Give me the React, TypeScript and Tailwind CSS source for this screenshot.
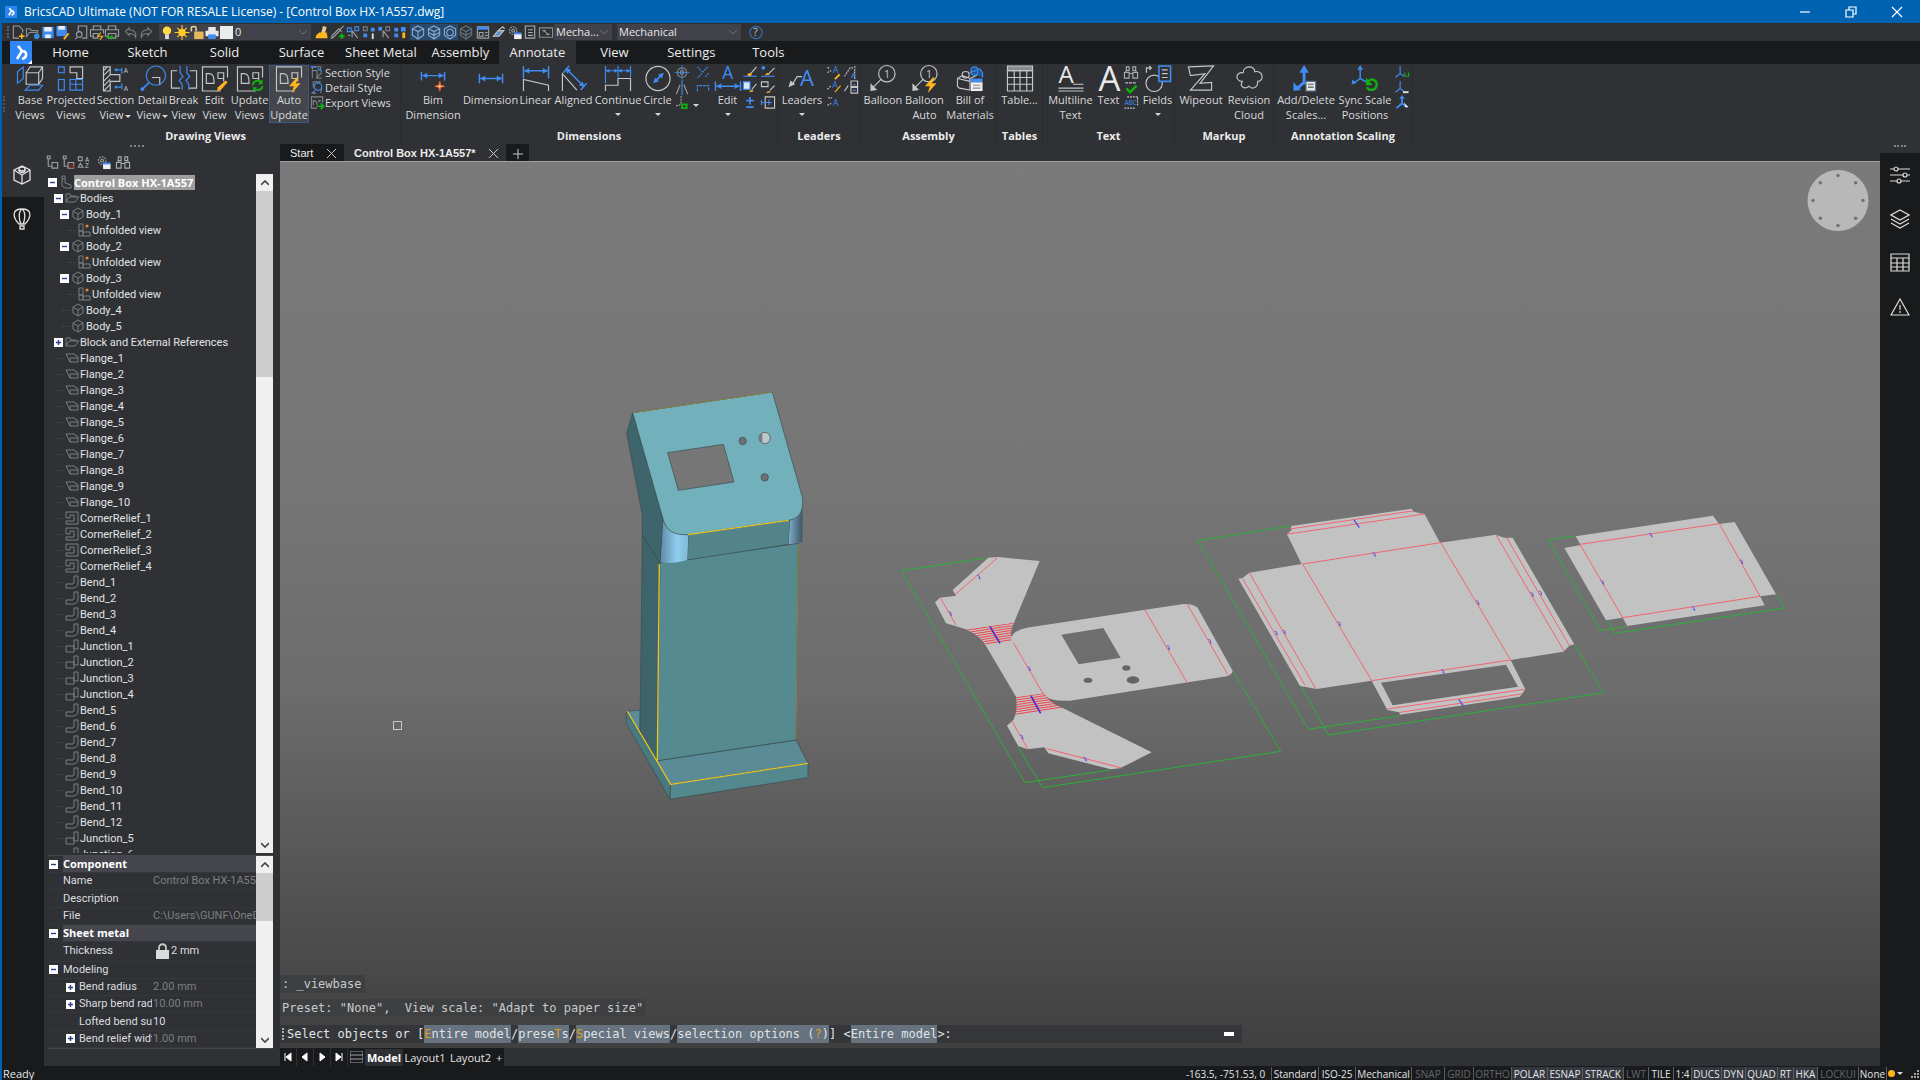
// BricsCAD style workspace: title bar, quick access bar, ribbon, mechanical
// browser on the left, model viewport with command line, and status bar.

import type { ReactNode } from "react";
import clsx from "clsx";

const W = "#c4c6c8";
const B = "#3f8cf4";
const Y = "#ffb61e";
const G = "#10b010";

/* ---------- icon helpers ---------- */

function Svg({ size, className, children }: { size: number; className?: string; children: ReactNode }) {
  return (
    <svg
      viewBox={`0 0 ${size} ${size}`}
      fill="none"
      stroke={W}
      strokeWidth="1.2"
      className={clsx("shrink-0 overflow-visible", className)}
      aria-hidden="true"
    >
      {children}
    </svg>
  );
}

const Big = ({ children }: { children: ReactNode }) => (
  <Svg size={28} className="h-[27px] w-7">
    {children}
  </Svg>
);

const Small = ({ children }: { children: ReactNode }) => (
  <Svg size={16} className="h-[15px] w-4">
    {children}
  </Svg>
);

function Glyph({ x, y, size, fill = W, children }: { x: number; y: number; size: number; fill?: string; children: string }) {
  return (
    <text x={x} y={y} fontSize={size} fill={fill} stroke="none" fontFamily="Open Sans, sans-serif">
      {children}
    </text>
  );
}

const Bolt = () => <path d="M22 13l-8 9h5l-2 7 9-10h-5l3-6z" fill={Y} stroke="none" />;

const Sheet = () => (
  <>
    <path d="M20 27H1V2h26v11" />
    <path d="M5 19V9h3c4 0 5 3 5 10zM17 14V8h6v9M17 14h6" />
  </>
);

/* ---------- ribbon icons ---------- */

const icons = {
  base: (
    <Big>
      <path d="M10 8h13v12H10zM10 8l4-6h13v12l-4 6M23 8l4-6" />
      <path d="M1 7l6-5v12l-6 5zM9 26l5-5h13l-4 5z" stroke={B} />
    </Big>
  ),
  projected: (
    <Big>
      <path d="M13 2h13v12h-6V8h-7z" />
      <path d="M1 2h6v6H1zM1 15h6v11H1zM13 15h13v11H13zM19 15v11M13 20h13" stroke={B} />
    </Big>
  ),
  section: (
    <Big>
      <path d="M1 2h7v8h10v7H8v10H1zM1 6l4-4M1 11l7-7M1 17l7-7M1 22l7-7M1 27l7-7" />
      <path d="M20 3v6M20 19v6M20 5h-7M20 23h-7" stroke={B} />
      <path d="M12 5l3-2v4zM12 23l3-2v4z" fill={B} stroke="none" />
      <Glyph x={22} y={8} size={7}>A</Glyph>
      <Glyph x={22} y={27} size={7}>A</Glyph>
    </Big>
  ),
  detail: (
    <Big>
      <path d="M13 13h8v8" />
      <circle cx="17" cy="11" r="10" stroke={B} />
      <path d="M10 18l-8 8" stroke={B} strokeWidth="1.8" />
      <circle cx="3" cy="25" r="2" fill={B} stroke="none" />
    </Big>
  ),
  brk: (
    <Big>
      <path d="M7 6H1v18h9M20 6h7v18h-8" />
      <path d="M10 1v7l3 4-4 4 3 4v6M17 1v7l3 4-4 4 3 4v6" stroke={B} />
    </Big>
  ),
  edit: (
    <Big>
      <Sheet />
      <path d="M16 27l1-4 8-7 2 2-7 8z" fill={Y} stroke="none" />
    </Big>
  ),
  update: (
    <Big>
      <Sheet />
      <path d="M17 21c0-5 7-6 9-3M27 22c-1 5-7 5-9 2" stroke={G} strokeWidth="2" />
      <path d="M27 15v5h-5zM17 28v-5h4z" fill={G} stroke="none" />
    </Big>
  ),
  auto: (
    <Big>
      <Sheet />
      <Bolt />
    </Big>
  ),
  bim: (
    <Big>
      <path d="M2 7v9M26 7v9M3 11h22" stroke={B} strokeWidth="1.5" />
      <path d="M3 11l5-3v6zM25 11l-5-3v6z" fill={B} stroke="none" />
      <path d="M21 17l1 4 4 1-4 1-1 4-1-4-4-1 4-1z" fill="#ffd9a0" stroke="#e2622a" />
    </Big>
  ),
  dimension: (
    <Big>
      <path d="M2 9v10M26 9v10M3 14h22" stroke={B} strokeWidth="1.5" />
      <path d="M3 14l5-3v6zM25 14l-5-3v6z" fill={B} stroke="none" />
    </Big>
  ),
  linear: (
    <Big>
      <path d="M1 1v13M27 1v13M2 6h24" stroke={B} strokeWidth="1.5" />
      <path d="M2 6l5-3v6zM26 6l-5-3v6z" fill={B} stroke="none" />
      <path d="M1 27V15l26 6v6" />
    </Big>
  ),
  aligned: (
    <Big>
      <path d="M2 27V9l15 17" />
      <path d="M3 8l6-7M21 26l6-7M6 4l18 18" stroke={B} strokeWidth="1.5" />
      <path d="M5 3l6 2-4 4zM25 23l-6-2 4-4z" fill={B} stroke="none" />
    </Big>
  ),
  cont: (
    <Big>
      <path d="M1 1v18M14 1v12M27 1v12M1 6h26" stroke={B} />
      <path d="M1 6l4-2v4zM14 6l-4-2v4zM14 6l4-2v4zM27 6l-4-2v4z" fill={B} stroke="none" />
      <path d="M1 27v-6h13v-7h13v13" />
    </Big>
  ),
  circle: (
    <Big>
      <circle cx="14" cy="14" r="12.5" />
      <path d="M11 17l6-6" stroke={B} strokeWidth="1.8" />
      <path d="M9 19l2-6 4 4zM20 8l-2 6-4-4z" fill={B} stroke="none" />
    </Big>
  ),
  editDim: (
    <Big>
      <Glyph x={8} y={14} size={18} fill={B}>A</Glyph>
      <path d="M1 17v10M27 17v10M2 22h24" stroke={B} strokeWidth="1.5" />
      <path d="M2 22l5-3v6zM26 22l-5-3v6z" fill={B} stroke="none" />
    </Big>
  ),
  leaders: (
    <Big>
      <path d="M14 12H9l-5 8" />
      <path d="M0 23l2-7 5 4z" fill={W} stroke="none" />
      <Glyph x={12} y={22} size={23} fill={B}>A</Glyph>
    </Big>
  ),
  balloon: (
    <Big>
      <circle cx="18" cy="9" r="8.5" />
      <path d="M12 15l-8 8" />
      <path d="M1 27V19l7 7z" fill={W} stroke="none" />
      <Glyph x={15} y={13} size={11}>1</Glyph>
    </Big>
  ),
  balloonAuto: (
    <Big>
      <circle cx="18" cy="9" r="8.5" />
      <path d="M12 15l-8 8" />
      <path d="M1 27V19l7 7z" fill={W} stroke="none" />
      <Glyph x={15} y={13} size={11}>1</Glyph>
      <Bolt />
    </Big>
  ),
  bom: (
    <Big>
      <path d="M1 14l5-3 8 3v12L3 24l-2-2zM14 14l8-4M6 9c0-3 7-3 7 0v3c-2 2-5 2-7 0zM1 14l13 3" />
      <path d="M15 5c0-4 7-4 7 0v4c-2 2-5 2-7 0zM14 8l10-4 3 4v5" stroke={B} fill="#24538f" />
      <path d="M15 14h12v4H15z" fill={B} stroke="none" />
      <path d="M15 18h12v9H15z" fill="#f2f2f2" stroke="none" />
      <path d="M17 21h8M17 24h8" stroke="#888" />
    </Big>
  ),
  table: (
    <Big>
      <path d="M1 1h26v5H1z" fill="#8b8d90" />
      <path d="M1 6h26v21H1zM1 13h26M1 20h26M8 6v21M14 6v21M21 6v21" />
    </Big>
  ),
  mtext: (
    <Big>
      <Glyph x={1} y={19} size={25} fill="#e8e8e8">A</Glyph>
      <path d="M16 20h11M1 24h26M1 27h26" />
    </Big>
  ),
  text: (
    <Big>
      <Glyph x={3} y={27} size={36} fill="#e8e8e8">A</Glyph>
    </Big>
  ),
  fields: (
    <Big>
      <circle cx="10" cy="19" r="8.5" />
      <path d="M2 8V3h5M5 1l2 2-2 2" />
      <path d="M15 1h12v16H15z" stroke={B} strokeWidth="1.6" fill="#2f3134" />
      <path d="M18 5h6M18 9h6M18 13h6" />
    </Big>
  ),
  wipeout: (
    <Big>
      <path d="M1 2l26-1-14 18 12-1v8H3L18 9 3 11z" />
    </Big>
  ),
  cloud: (
    <Big>
      <path d="M8 8c0-8 12-8 12-1 9-2 10 10 3 10 0 8-7 8-9 5-5 4-10 0-7-5-8-1-7-10 1-9z" />
    </Big>
  ),
  scales: (
    <Big>
      <path d="M12 4v14L4 25M12 18l5 3" stroke={B} strokeWidth="3" />
      <path d="M12 0l5 8H7zM1 27V18l8 8z" fill={B} stroke="none" />
      <path d="M14 17h10v10H14z" fill="#e6e6e6" stroke="#51718f" />
      <path d="M16 20h6M16 23h6" stroke="#555" />
    </Big>
  ),
  sync: (
    <Big>
      <path d="M9 2v12L2 19M9 14l7 4" stroke={B} strokeWidth="1.5" />
      <path d="M9 0l3 5H6zM0 20l1-5 4 4z" fill={B} stroke="none" />
      <path d="M17 18c3-6 10-2 9 3-1 6-8 6-10 2" stroke={G} strokeWidth="2.4" />
      <path d="M15 13v8h7z" fill={G} stroke="none" />
    </Big>
  ),
};

/* ---------- small 16px icons ---------- */

const s = {
  sectionStyle: <Small><path d="M3 14V2h9v4M3 6h5v8h5M7 14l6-6" stroke="#7b7e82" /><path d="M1 2h6M9 4l4 3" stroke={B} /></Small>,
  detailStyle: <Small><path d="M4 8V2h8M2 14h5M12 14l1-6" stroke="#7b7e82" /><circle cx="9" cy="7" r="4" stroke={B} /><path d="M6 11l-3 3" stroke={B} /></Small>,
  exportViews: <Small><path d="M14 8V2H2v12h6M4 11V6c4 0 4 2 4 5M10 8V6h2" stroke="#85888b" /><path d="M8 12h6M12 9l3 3-3 3" stroke={G} strokeWidth="1.8" /></Small>,
  center: <Small><circle cx="8" cy="8" r="5" stroke="#85888b" /><circle cx="8" cy="8" r="2" stroke="#85888b" /><path d="M8 0v16M0 8h16" stroke={B} strokeWidth=".8" /></Small>,
  angular: <Small><path d="M8 0v16" stroke={B} /><path d="M6 5L2 15M10 5l4 10" stroke="#9da0a3" /></Small>,
  arc: <Small><path d="M7 1v6c0 4-3 5-6 4" strokeDasharray="2 1" stroke="#9da0a3" /><path d="M8 10h5v4H8z" stroke={G} strokeWidth="2" /></Small>,
  ordinate: <Small><path d="M2 2l5 5M13 2L2 14M14 9l-4 4" stroke={B} strokeDasharray="2 1" /></Small>,
  jog: <Small><path d="M2 12V6h12v6" stroke={B} strokeDasharray="3 1" /></Small>,
  brush: <Small><path d="M1 12h14" stroke={B} /><path d="M15 2L9 9" /><path d="M5 11c1-3 4-3 5-1-1 2-3 2-5 1z" fill={Y} stroke="none" /></Small>,
  brushDot: <Small><path d="M1 12h14" stroke={B} /><circle cx="3" cy="3" r="2" fill={B} stroke="none" /><path d="M15 3L9 9" /><path d="M5 11c1-3 4-3 5-1z" fill={Y} stroke="none" /></Small>,
  brushSave: <Small><path d="M1 2h7v8H1z" fill="#dfe9f5" stroke={B} /><path d="M15 4l-5 6" /><path d="M7 13c1-3 4-3 5-1z" fill={Y} stroke="none" /></Small>,
  brushBox: <Small><path d="M1 2h7v5H1zM15 6l-5 5" /><path d="M6 14c1-3 4-3 5-1z" fill="#d9a04e" stroke="none" /></Small>,
  plusMinus: <Small><path d="M8 2v8M4 6h8M4 13h8" stroke={B} strokeWidth="1.8" /></Small>,
  dimBox: <Small><path d="M5 2h10v12H5z" /><path d="M1 8h11M9 5v6M1 5v6" stroke={B} /></Small>,
  leaderPen: <Small><path d="M1 3h3M1 8l4-2" strokeDasharray="2 1" /><Glyph x={7} y={9} size={9} fill={B}>A</Glyph><path d="M9 15l5-5" stroke={Y} strokeWidth="2" /></Small>,
  leaderAlign: <Small><path d="M1 12l6-9h3M12 1v14" strokeDasharray="2 1" /><Glyph x={8} y={14} size={8} fill={B}>A</Glyph></Small>,
  leaderBrush: <Small><path d="M1 10l4-4" strokeDasharray="2 1" /><Glyph x={6} y={9} size={9} fill={B}>A</Glyph><path d="M15 6l-6 7" stroke={Y} /></Small>,
  leaderBox: <Small><path d="M1 12l4-6M8 1h7v6H8zM8 8h7v6H8z" /><path d="M10 5h3M10 11h3" stroke={B} /></Small>,
  leaderStyle: <Small><path d="M2 3h4M1 11l4-2" strokeDasharray="2 1" /><Glyph x={7} y={12} size={9} fill={B}>A</Glyph></Small>,
  find: <Small><path d="M3 2h3v4H3zM10 2h3v4h-3zM1 8h5v6H1zM10 8h5v6h-5zM6 9h4M2 8l1-2M14 8l-1-2" stroke="#a9abae" /></Small>,
  check: <Small><path d="M2 3h12" strokeDasharray="3 1" /><path d="M3 9l4 4 7-7" stroke={G} strokeWidth="2.6" /></Small>,
  abc: <Small><path d="M4 2h11v9M1 14h11" strokeDasharray="2 1" /><Glyph x={1} y={11} size={7} fill={B}>ABC</Glyph></Small>,
  axisA: <Small><path d="M6 1v8l-5 4M6 9l4 3" stroke={B} /><path d="M11 8v4h4v-4" stroke={G} /></Small>,
  axisB: <Small><path d="M6 1v8l-5 4M6 9l4 3" stroke={B} /><path d="M9 13h6" stroke="#e6e6e6" strokeWidth="2" /></Small>,
  axisC: <Small><path d="M8 2v7l-6 5M8 9l5 4" stroke={B} strokeWidth="2" /><path d="M8 0l3 4H5z" fill={B} stroke="none" /><path d="M10 8l5 5h-3z" fill="#fff" stroke="none" /></Small>,
  new: <Small><path d="M3 1h6l4 4v3M3 1v13h6" stroke="#9da0a3" /><path d="M12 9v6M9 12h6" stroke={Y} strokeWidth="1.6" /></Small>,
  open: <Small><path d="M1 13V4h4l1 2h7v3M1 13l3-5h8" stroke="#8d9093" /><circle cx="12" cy="12" r="3" fill="#2f8fe0" stroke="none" /></Small>,
  save: <Small><path d="M2 2h12v12H2z" fill={B} stroke="none" /><path d="M4 2h8v5H4zM5 10h6v4H5z" fill="#e8eef6" stroke="none" /></Small>,
  saveAs: <Small><path d="M1 1h11v11H1z" fill={B} stroke="none" /><path d="M3 1h7v4H3z" fill="#e8eef6" stroke="none" /><path d="M9 15l5-6" stroke={Y} strokeWidth="2" /></Small>,
  preview: <Small><path d="M4 8V1h9v13H8M3 13l-2 2" stroke="#9da0a3" /><circle cx="5" cy="10" r="3" stroke="#9da0a3" /></Small>,
  print: <Small><path d="M4 5V1h8v4M4 12H1V5h14v4M4 9h5v5H4z" stroke="#9da0a3" /><path d="M12 8l-3 4h5l-3 4" stroke={Y} /></Small>,
  publish: <Small><path d="M4 5V1h8v4M4 12H1V5h14v7h-3M4 9h8v5H4z" stroke="#9da0a3" /><path d="M2 13h7M7 11l2 2-2 2" stroke={G} strokeWidth="1.6" /></Small>,
  undo: <Small><path d="M6 3L2 7l4 4V9c4 0 6 1 7 4 1-5-2-8-7-8z" stroke="#7b7e82" /></Small>,
  redo: <Small><path d="M10 3l4 4-4 4V9c-4 0-6 1-7 4-1-5 2-8 7-8z" stroke="#7b7e82" /></Small>,
  bulb: <Small><circle cx="8" cy="6" r="4.5" fill="#ffdc3c" stroke="none" /><path d="M6 10h4v5H6z" fill="#e0e0e0" stroke="none" /></Small>,
  sun: <Small><circle cx="8" cy="8" r="4" fill="#ffc928" stroke="none" /><path d="M8 0v16M0 8h16M3 3l10 10M13 3L3 13" stroke="#ffc928" /></Small>,
  lock: <Small><path d="M2 7V3c0-2 5-2 5 0v4" stroke="#e6d3a0" strokeWidth="1.6" /><path d="M5 7h10v8H5z" fill="#e4b95e" stroke="none" /></Small>,
  printer: <Small><path d="M4 2h8v4H4zM1 6h14v6H1z" fill="#e8e8e8" stroke="none" /><path d="M4 10h8v5H4z" fill={B} stroke="none" /></Small>,
  match: <Small><path d="M9 1l4 1-2 7H7z" fill="#e8c88a" stroke="none" /><path d="M2 11l3-3h8l1 6H1z" fill={Y} stroke="none" /></Small>,
  pick: <Small><path d="M14 1l-4 4M9 4l3 3M10 6l-7 7-2 1 1-3 7-7" stroke="#9da0a3" /><path d="M12 9v6M9 12h6" stroke={G} strokeWidth="2" /></Small>,
  selA: <Small><path d="M2 3h4v4H2zM10 2h4v4h-4z" stroke={B} /><path d="M7 6l6 8M7 6v7M3 11h2" stroke="#9da0a3" /></Small>,
  selB: <Small><path d="M2 2h4v4H2z" stroke="#7b7e82" /><path d="M2 9h4v4H2zM10 3h4v4h-4z" fill={B} stroke="none" /><path d="M12 9v6" stroke="#dedede" strokeWidth="2" /></Small>,
  selC: <Small><path d="M10 2h4v4h-4z" stroke="#7b7e82" /><path d="M2 2h4v4H2z" fill={B} stroke="none" /><path d="M7 6l6 8M7 6v7" stroke="#9da0a3" /></Small>,
  selD: <Small><path d="M2 3h4v4H2zM2 9h4v4H2zM9 2h5v5H9z" fill={B} stroke="none" /><path d="M12 8v6" stroke={Y} strokeWidth="3" /></Small>,
  cubeA: <Small><path d="M2 4l6-3 6 3v7l-6 4-6-4zM2 4l6 3 6-3M8 7v8" stroke="#84aad4" /></Small>,
  cubeB: <Small><path d="M2 4l6-3 6 3v7l-6 4-6-4zM2 4l6 3 6-3M8 7v8M2 8l6 3 6-3" stroke="#84aad4" /></Small>,
  cubeC: <Small><path d="M2 4l6-3 6 3v7l-6 4-6-4z" stroke="#84aad4" /><circle cx="8" cy="8" r="3.5" stroke="#84aad4" /></Small>,
  cubeD: <Small><path d="M2 4l6-3 6 3v7l-6 4-6-4zM2 4l6 3 6-3M8 7v8M2 8l6 3 6-3" stroke="#5f7285" /></Small>,
  panel: <Small><path d="M2 2h12v12H2z" stroke="#9da0a3" /><path d="M2 2h12v3H2z" fill={B} stroke="none" /><path d="M4 8h4v4H4zM10 8h3M10 11h3" stroke="#9da0a3" /></Small>,
  clip: <Small><path d="M2 12l5-6h6l-5 6z" fill="#5b8ec9" /><path d="M7 6l5-4 2 2" /></Small>,
  gear: <Small><circle cx="6" cy="6" r="4" strokeDasharray="2 1" stroke="#9da0a3" /><circle cx="6" cy="6" r="1.5" stroke="#9da0a3" /><path d="M7 8h8v3H7z" fill={B} stroke="none" /><path d="M7 10h8v5H7z" fill="#eee" stroke="none" /></Small>,
  list: <Small><path d="M3 1h10v13H3zM6 5h5M6 8h5M6 11h5" stroke="#a9abae" /></Small>,
  link: <Small><path d="M1 3h14v10H1zM4 6h4M8 10h4M5 6l6 4" stroke="#8d9093" /></Small>,
  help: <Small><circle cx="8" cy="8" r="6.5" stroke="#3a72b8" /><Glyph x={5} y={12} size={11}>?</Glyph></Small>,
  treeA: <Small><path d="M3 1h3v3H3zM4 4v8h4M8 8h6v6H8z" stroke="#9da0a3" /></Small>,
  treeB: <Small><path d="M3 1h3v3H3zM4 4v8h4M8 8h6v6H8z" stroke="#9da0a3" /><path d="M10 10h4v4h-4z" fill="#7a2530" stroke="none" /></Small>,
  sort: <Small><path d="M2 2h4v4H2zM4 9l-2 4h5z" stroke="#9da0a3" /><Glyph x={9} y={7} size={7}>A</Glyph><Glyph x={9} y={14} size={7}>Z</Glyph></Small>,
};

/* ---------- title and quick access ---------- */

const LOGO = "M8 4l4 5-5 8M12 9c5 0 6 6 0 8";

function TitleBar() {
  return (
    <header className="flex h-[23px] shrink-0 items-center bg-[#0063b1] text-white">
      <span className="ml-[3px] flex size-3 items-center justify-center bg-[#2f86ee]">
        <svg viewBox="0 0 22 22" className="size-3" fill="none" stroke="#fff" strokeWidth="3">
          <path d={LOGO} />
        </svg>
      </span>
      <h1 className="ml-[7px] flex-1 text-xs">BricsCAD Ultimate (NOT FOR RESALE License) - [Control Box HX-1A557.dwg]</h1>
      {[
        ["Minimize", "M1 6h10"],
        ["Restore", "M1 4h7v7H1zM4 4V1h7v7H8"],
        ["Close", "M1 1l10 10M11 1L1 11"],
      ].map(([label, d]) => (
        <button key={label} aria-label={label} className="flex h-full w-[46px] items-center justify-center">
          <svg viewBox="0 0 12 12" className="size-3" fill="none" stroke="#fff" strokeWidth="1.2">
            <path d={d} />
          </svg>
        </button>
      ))}
    </header>
  );
}

function Chevron() {
  return (
    <svg viewBox="0 0 8 6" className="pointer-events-none mr-1 h-1.5 w-2 shrink-0" fill="none" stroke="#6d7074">
      <path d="M0 1l4 4 4-4" />
    </svg>
  );
}

function Combo({ label, value, className, children }: { label: string; value: string; className: string; children?: ReactNode }) {
  return (
    <div className={clsx("flex h-4 items-center bg-[#414149]", className)}>
      {children}
      <select aria-label={label} className="min-w-0 flex-1 appearance-none bg-transparent pl-0.5 text-[11px] leading-4 text-[#e6e6e6] outline-none">
        <option>{value}</option>
      </select>
      <Chevron />
    </div>
  );
}

function Tool({ label, on, slim, children }: { label: string; on?: boolean; slim?: boolean; children: ReactNode }) {
  return (
    <button aria-label={label} className={clsx("flex h-4 shrink-0 items-center justify-center", slim ? "w-[15px]" : "w-4", on && "bg-[#2c4868]")}>
      {children}
    </button>
  );
}

function QuickBar() {
  return (
    <div className="flex h-[18px] shrink-0 items-center bg-[#2f3134]">
      <span className="ml-[5px] mr-px h-3 w-0 border-l-2 border-dotted border-[#5d6064]" />
      <Tool slim label="New">{s.new}</Tool>
      <Tool slim label="Open">{s.open}</Tool>
      <Tool slim label="Save">{s.save}</Tool>
      <Tool slim label="Save as">{s.saveAs}</Tool>
      <span className="w-1" />
      <Tool slim label="Print preview">{s.preview}</Tool>
      <Tool slim label="Print">{s.print}</Tool>
      <Tool slim label="Publish">{s.publish}</Tool>
      <span className="w-1" />
      <Tool slim label="Undo">{s.undo}</Tool>
      <Tool slim label="Redo">{s.redo}</Tool>
      <Combo label="Layer" value="0" className="ml-1.5 mr-[3px] w-[152px] shrink-0">
        <span className="flex shrink-0 -space-x-px">
          {s.bulb}
          {s.sun}
          {s.lock}
          {s.printer}
        </span>
        <span className="size-[13px] shrink-0 bg-[#ececec]" />
      </Combo>
      <Tool label="Match properties">{s.match}</Tool>
      <Tool slim label="Pick layer">{s.pick}</Tool>
      <Tool label="Select face">{s.selA}</Tool>
      <Tool slim label="Hide objects">{s.selB}</Tool>
      <Tool label="Isolate objects">{s.selC}</Tool>
      <Tool label="Show objects">{s.selD}</Tool>
      <span className="w-0.5" />
      <Tool on label="Edges">{s.cubeA}</Tool>
      <Tool on label="Faces">{s.cubeB}</Tool>
      <Tool on label="Solids">{s.cubeC}</Tool>
      <Tool slim label="Boundaries">{s.cubeD}</Tool>
      <span className="w-0.5" />
      <Tool label="Properties">{s.panel}</Tool>
      <Tool label="Layers">{s.clip}</Tool>
      <Tool slim label="Settings">{s.gear}</Tool>
      <Tool label="Explorer">{s.list}</Tool>
      <Tool label="Command line">{s.link}</Tool>
      <Combo label="Workspace" value="Mecha..." className="w-[58px]" />
      <Combo label="Ribbon profile" value="Mechanical" className="ml-[5px] mr-[7px] w-[124px]" />
      <Tool label="Help">{s.help}</Tool>
    </div>
  );
}

/* ---------- ribbon ---------- */

const RIBBON_TABS = ["Home", "Sketch", "Solid", "Surface", "Sheet Metal", "Assembly", "Annotate", "View", "Settings", "Tools"];

function RibbonTabs() {
  return (
    <nav className="flex h-[23px] shrink-0 bg-[#191a1c]">
      <button aria-label="Application menu" className="ml-2 flex w-[22px] items-center justify-center bg-[#2f86f6]">
        <svg viewBox="0 0 22 22" className="size-[22px]" fill="none" stroke="#fff" strokeWidth="2.6">
          <path d={LOGO} />
          <path d="M22 18v4h-4z" fill="#fff" stroke="none" />
        </svg>
      </button>
      <div className="flex">
        {RIBBON_TABS.map(t => (
          <button
            key={t}
            className={clsx("min-w-[77px] whitespace-nowrap px-[5px] text-center text-[13px] text-[#ececec]", t === "Annotate" && "bg-[#2f3134]")}
          >
            {t}
          </button>
        ))}
      </div>
    </nav>
  );
}

function Caret() {
  return <span className="mx-px inline-block border-x-[3px] border-t-[3px] border-x-transparent border-t-[#d8d8d8] align-middle" />;
}

interface BtnProps {
  icon: ReactNode;
  text: string[];
  width: string;
  caret?: "inline" | "below";
  active?: boolean;
}

function RibbonButton({ icon, text, width, caret, active }: BtnProps) {
  return (
    <button
      className={clsx(
        "flex h-[58px] shrink-0 flex-col items-center whitespace-nowrap text-[11px] leading-[15px] text-[#d8dadc]",
        width,
        active && "bg-[#44464b] outline outline-1 -outline-offset-1 outline-[#3d5a86]"
      )}
    >
      {icon}
      {text.map((line, i) => (
        <span key={line}>
          {line}
          {caret === "inline" && i === 1 && <Caret />}
        </span>
      ))}
      {caret === "below" && (
        <span className="flex h-[15px] items-center">
          <Caret />
        </span>
      )}
    </button>
  );
}

function Group({ title, children }: { title: string; children: ReactNode }) {
  return (
    <section className="flex flex-col border-r border-[#2a2c2f]">
      <div className="flex flex-1 px-px pt-px">{children}</div>
      <h2 className="pb-px text-center text-[11px] font-bold leading-[15px] text-[#ececec]">{title}</h2>
    </section>
  );
}

function IconCol({ width, items }: { width: string; items: ReactNode[] }) {
  return (
    <div className={clsx("grid content-start justify-items-center", width)}>
      {items.map((it, i) => (
        <span key={i} className="flex h-[15px] items-center">
          {it}
        </span>
      ))}
    </div>
  );
}

function Ribbon() {
  return (
    <div className="flex h-[80px] shrink-0 bg-[#2f3134]">
      <span className="ml-px mr-1.5 h-4 w-0 self-center border-l-2 border-dotted border-[#55585c]" />
      <Group title="Drawing Views">
        <RibbonButton icon={icons.base} text={["Base", "Views"]} width="w-9" />
        <RibbonButton icon={icons.projected} text={["Projected", "Views"]} width="w-[46px]" />
        <RibbonButton icon={icons.section} text={["Section", "View"]} width="w-[43px]" caret="inline" />
        <RibbonButton icon={icons.detail} text={["Detail", "View"]} width="w-[31px]" caret="inline" />
        <RibbonButton icon={icons.brk} text={["Break", "View"]} width="w-[31px]" />
        <RibbonButton icon={icons.edit} text={["Edit", "View"]} width="w-[31px]" />
        <RibbonButton icon={icons.update} text={["Update", "Views"]} width="w-[39px]" />
        <RibbonButton icon={icons.auto} text={["Auto", "Update"]} width="w-10" active />
        <div className="flex w-[90px] flex-col text-[11px] leading-[15px] text-[#d8dadc]">
          {[
            [s.sectionStyle, "Section Style"],
            [s.detailStyle, "Detail Style"],
            [s.exportViews, "Export Views"],
          ].map(([icon, label]) => (
            <button key={label as string} className="flex items-center whitespace-nowrap">
              {icon}
              {label}
            </button>
          ))}
        </div>
      </Group>
      <Group title="Dimensions">
        <RibbonButton icon={icons.bim} text={["Bim", "Dimension"]} width="w-[62px]" />
        <RibbonButton icon={icons.dimension} text={["Dimension"]} width="w-[53px]" />
        <RibbonButton icon={icons.linear} text={["Linear"]} width="w-[37px]" />
        <RibbonButton icon={icons.aligned} text={["Aligned"]} width="w-[39px]" />
        <RibbonButton icon={icons.cont} text={["Continue"]} width="w-[50px]" caret="below" />
        <RibbonButton icon={icons.circle} text={["Circle"]} width="w-[29px]" caret="below" />
        <IconCol width="w-5" items={[s.center, s.angular, s.arc]} />
        <span className="flex h-[42px] w-0 items-end">
          <Caret />
        </span>
        <IconCol width="w-[22px]" items={[s.ordinate, s.jog]} />
        <RibbonButton icon={icons.editDim} text={["Edit"]} width="w-[27px]" caret="below" />
        <IconCol width="w-[18px]" items={[s.brush, s.brushSave, s.plusMinus]} />
        <IconCol width="w-[17px]" items={[s.brushDot, s.brushBox, s.dimBox]} />
      </Group>
      <Group title="Leaders">
        <RibbonButton icon={icons.leaders} text={["Leaders"]} width="w-[46px]" caret="below" />
        <IconCol width="w-[17px]" items={[s.leaderPen, s.leaderBrush, s.leaderStyle]} />
        <IconCol width="w-[17px]" items={[s.leaderAlign, s.leaderBox]} />
      </Group>
      <Group title="Assembly">
        <RibbonButton icon={icons.balloon} text={["Balloon"]} width="w-[42px]" />
        <RibbonButton icon={icons.balloonAuto} text={["Balloon", "Auto"]} width="w-[41px]" />
        <RibbonButton icon={icons.bom} text={["Bill of", "Materials"]} width="w-[50px]" />
      </Group>
      <Group title="Tables">
        <RibbonButton icon={icons.table} text={["Table..."]} width="w-[43px]" />
      </Group>
      <Group title="Text">
        <RibbonButton icon={icons.mtext} text={["Multiline", "Text"]} width="w-[53px]" />
        <RibbonButton icon={icons.text} text={["Text"]} width="w-[23px]" />
        <IconCol width="w-[22px]" items={[s.find, s.check, s.abc]} />
        <RibbonButton icon={icons.fields} text={["Fields"]} width="w-[31px]" caret="below" />
      </Group>
      <Group title="Markup">
        <RibbonButton icon={icons.wipeout} text={["Wipeout"]} width="w-[50px]" />
        <RibbonButton icon={icons.cloud} text={["Revision", "Cloud"]} width="w-[46px]" />
      </Group>
      <Group title="Annotation Scaling">
        <RibbonButton icon={icons.scales} text={["Add/Delete", "Scales..."]} width="w-[62px]" />
        <RibbonButton icon={icons.sync} text={["Sync Scale", "Positions"]} width="w-[56px]" />
        <IconCol width="w-[18px]" items={[s.axisA, s.axisB, s.axisC]} />
      </Group>
    </div>
  );
}

/* ---------- left browser ---------- */

function Expander({ open }: { open: boolean }) {
  return (
    <button aria-label={open ? "Collapse" : "Expand"} className="flex size-[9px] shrink-0 items-center justify-center bg-white">
      <svg viewBox="0 0 9 9" className="size-[9px]" stroke="#2c3f8c" strokeWidth="1.4">
        <path d={open ? "M2 4.500h5" : "M2 4.500h5M4.500 2v5"} />
      </svg>
    </button>
  );
}

type Kind = "root" | "folder" | "body" | "view" | "flange" | "relief" | "bend" | "junction";

const KIND_PATH: Record<Kind, string> = {
  root: "M3 1h3v7l6 2v3H7l-4-2zM3 4h3",
  folder: "M1 11V3h4l1 2h5v1M1 11l3-5h10l-4 5z",
  body: "M2 4l5-3 5 3v6l-5 3-5-3zM2 4l5 3 5-3M7 7v6",
  view: "M2 1h4v7H2zM2 8h4v5H2zM6 9h7v4H6z",
  flange: "M1 3h8l4 3v5H5L1 3M5 7h8M5 7v4",
  relief: "M1 1h12v12H1v-3h8V4H5v3H1z",
  bend: "M9 1h4v7c0 3-2 5-5 5H1V9h6c2 0 2-1 2-2z",
  junction: "M9 1h4v9H9zM1 7h8v6H1z",
};

interface Row {
  label: string;
  level: number;
  kind: Kind;
  open?: boolean;
}

const series = (name: string, kind: Kind, from: number, to: number): Row[] =>
  Array.from({ length: to - from + 1 }, (_, i) => ({ label: `${name}_${from + i}`, level: 1, kind }));

const body = (n: number, open?: boolean): Row => ({ label: `Body_${n}`, level: 2, kind: "body", open });
const unfolded: Row = { label: "Unfolded view", level: 3, kind: "view" };

const ROWS: Row[] = [
  { label: "Control Box HX-1A557", level: 0, kind: "root", open: true },
  { label: "Bodies", level: 1, kind: "folder", open: true },
  body(1, true),
  unfolded,
  body(2, true),
  unfolded,
  body(3, true),
  unfolded,
  body(4),
  body(5),
  { label: "Block and External References", level: 1, kind: "folder", open: false },
  ...series("Flange", "flange", 1, 10),
  ...series("CornerRelief", "relief", 1, 4),
  ...series("Bend", "bend", 1, 4),
  ...series("Junction", "junction", 1, 4),
  ...series("Bend", "bend", 5, 12),
  ...series("Junction", "junction", 5, 6),
];

const INDENT = ["pl-0", "pl-1.5", "pl-3", "pl-[18px]"];

function TreeRow({ row }: { row: Row }) {
  return (
    <li className={clsx("flex h-4 shrink-0 items-center", INDENT[row.level])}>
      <span className="flex w-[11px] shrink-0 items-center">
        {row.open === undefined ? <span className="ml-0.5 w-2 border-t border-dotted border-[#44474b]" /> : <Expander open={row.open} />}
      </span>
      <svg viewBox="0 0 14 14" className="size-3.5 shrink-0" fill="none" stroke="#7b7e82">
        <path d={KIND_PATH[row.kind]} />
        {row.kind === "view" && <circle cx="10" cy="3" r="1.6" fill="#f08030" stroke="none" />}
      </svg>
      <span
        className={clsx("ml-px whitespace-nowrap", row.kind === "root" && "bg-[#9d9d9d] pr-0.5 font-['Open_Sans',sans-serif] font-bold text-white")}
      >
        {row.label}
      </span>
    </li>
  );
}

function ScrollBar({ thumb }: { thumb: string }) {
  return (
    <div className="flex w-[17px] shrink-0 flex-col bg-[#f0f0f0]">
      <button aria-label="Scroll up" className="flex h-[17px] items-center justify-center">
        <svg viewBox="0 0 8 6" className="h-1.5 w-2" fill="none" stroke="#444" strokeWidth="1.6">
          <path d="M0 5l4-4 4 4" />
        </svg>
      </button>
      <span className={clsx("bg-[#cdcdcd]", thumb)} />
      <button aria-label="Scroll down" className="mt-auto flex h-[17px] items-center justify-center">
        <svg viewBox="0 0 8 6" className="h-1.5 w-2" fill="none" stroke="#444" strokeWidth="1.6">
          <path d="M0 1l4 4 4-4" />
        </svg>
      </button>
    </div>
  );
}

const PROPS: { name: string; value?: string; head?: boolean; open?: boolean; dim?: boolean; sub?: boolean }[] = [
  { name: "Component", head: true, open: true },
  { name: "Name", value: "Control Box HX-1A557", dim: true },
  { name: "Description" },
  { name: "File", value: "C:\\Users\\GUNF\\OneD", dim: true },
  { name: "Sheet metal", head: true, open: true },
  { name: "Thickness", value: "2 mm" },
  { name: "Modeling", open: true },
  { name: "Bend radius", value: "2.00 mm", dim: true, sub: true, open: false },
  { name: "Sharp bend rad", value: "10.00 mm", dim: true, sub: true, open: false },
  { name: "Lofted bend sul", value: "10", sub: true },
  { name: "Bend relief widt", value: "1.00 mm", dim: true, sub: true, open: false },
];

function Properties() {
  return (
    <div className="mt-0.5 flex h-[194px] shrink-0 border-y border-[#46484c]">
      <div className="min-w-0 flex-1 overflow-hidden">
        <table className="h-full w-full table-fixed border-collapse text-[11px] leading-[14px]">
          <colgroup>
            <col className="w-[15px]" />
            <col className="w-[89px]" />
            <col />
          </colgroup>
          <tbody>
            {PROPS.map(p => (
              <tr key={p.name} className={clsx("border-b border-[#35373a]", p.head && "bg-[#45454e]")}>
                <td className="bg-[#2f3134] p-0 pl-px">{!p.sub && p.open !== undefined && <Expander open={p.open} />}</td>
                <th
                  scope="row"
                  className={clsx(
                    "overflow-hidden whitespace-nowrap p-0 text-left",
                    p.head ? "font-['Open_Sans',sans-serif] font-bold text-white" : "font-normal text-[#dcdee0]"
                  )}
                >
                  <span className="flex items-center overflow-hidden">
                    {p.sub && <span className="flex w-4 shrink-0 pl-[3px]">{p.open !== undefined && <Expander open={p.open} />}</span>}
                    {p.name}
                  </span>
                </th>
                <td className={clsx("overflow-hidden whitespace-nowrap p-0 pl-px", p.dim ? "text-[#7d7f83]" : "text-[#dcdee0]")}>
                  <span className="flex items-center overflow-hidden">
                    {p.name === "Thickness" && (
                      <svg viewBox="0 0 16 16" className="ml-0.5 size-4 shrink-0" fill="none">
                        <path d="M4 8V5c0-5 7-5 7 0v3" stroke="#c8cacc" strokeWidth="1.8" />
                        <path d="M1 7h13v9H1z" fill="#dadcdc" />
                      </svg>
                    )}
                    {p.value}
                  </span>
                </td>
              </tr>
            ))}
          </tbody>
        </table>
      </div>
      <ScrollBar thumb="h-12" />
    </div>
  );
}

function LeftPanel() {
  return (
    <aside className="flex w-[278px] shrink-0 bg-[#2f3134]">
      <div className="flex w-[42px] shrink-0 flex-col bg-[#191a1c] pr-0.5">
        <button aria-label="Mechanical browser" className="-mr-0.5 flex h-[53px] items-center justify-center bg-[#2f3134] pr-0.5 pt-2">
          <svg viewBox="0 0 20 20" className="size-5" fill="none" stroke="#e0e0e0" strokeWidth="1.3">
            <path d="M2 5l8-4 8 4v10l-8 4-8-4zM2 5l8 5 8-5M10 10v9" />
            <ellipse cx="10" cy="4" rx="3" ry="2" fill="#2f3134" />
            <path d="M7 4v2c1 2 5 2 6 0V4" />
          </svg>
        </button>
        <button aria-label="Tips" className="flex h-11 items-center justify-center">
          <svg viewBox="0 0 20 22" className="h-[22px] w-5" fill="none" stroke="#e0e0e0" strokeWidth="1.3">
            <path d="M10 1c11 0 9 9 3 15H7C1 10-1 1 10 1zM10 1c-4 3-3 11-1 15M10 1c4 3 3 11 1 15M8 18h4v3H8z" />
          </svg>
        </button>
      </div>
      <div className="flex min-w-0 flex-1 flex-col pb-[17px] pl-1 pr-[7px]">
        <span className="ml-[82px] mt-px h-0 w-3.5 border-t-2 border-dotted border-[#808386]" />
        <div className="-ml-1 flex h-[27px] shrink-0 items-center pt-1">
          <Tool label="Expand tree">{s.treeA}</Tool>
          <Tool label="Collapse tree">{s.treeB}</Tool>
          <Tool label="Sort">{s.sort}</Tool>
          <span className="w-1" />
          <Tool label="Options">{s.gear}</Tool>
          <span className="w-[3px]" />
          <Tool label="Search">{s.find}</Tool>
        </div>
        <div className="flex min-h-0 flex-1 font-[Roboto,sans-serif]">
          <ul className="flex min-w-0 flex-1 flex-col overflow-hidden text-[11px] leading-[15px] text-[#e2e4e6]">
            {ROWS.map((row, i) => (
              <TreeRow key={i} row={row} />
            ))}
          </ul>
          <ScrollBar thumb="h-[186px]" />
        </div>
        <div className="font-[Roboto,sans-serif]">
          <Properties />
        </div>
      </div>
    </aside>
  );
}

/* ---------- viewport ---------- */

function Kiosk() {
  return (
    <g transform="translate(600 370) scale(0.33333)" stroke="#3a4a4c" strokeWidth="2" strokeLinejoin="round">
      <defs>
        <linearGradient id="cornerL">
          <stop offset="0" stopColor="#5f8ca8" />
          <stop offset=".6" stopColor="#8fcdee" />
          <stop offset="1" stopColor="#7fb8d4" />
        </linearGradient>
        <linearGradient id="cornerR">
          <stop offset="0" stopColor="#7dadcb" />
          <stop offset="1" stopColor="#3a5560" />
        </linearGradient>
      </defs>
      <path d="M82 1024L120 1020V1088L172 1172L588 1110L624 1180L212 1243z" fill="#5a8b97" />
      <path d="M80 1026L212 1243L210 1288L78 1060z" fill="#487980" />
      <path d="M212 1243L624 1180V1223L210 1288z" fill="#54888f" />
      <path d="M127 495L180 578L172 1172L120 1088z" fill="#3e646b" />
      <path d="M180 578L595 520L588 1110L172 1172z" fill="#548a90" />
      <path d="M98 128L80 190L127 435V495L180 578L190 450z" fill="#3e656c" />
      <path d="M265 494L570 450L566 523L262 570z" fill="#52848a" />
      <path d="M190 450C198 485 225 496 265 494L262 570C230 580 205 580 182 577z" fill="url(#cornerL)" stroke="none" />
      <path d="M570 450C595 445 608 435 608 405L607 517L566 523z" fill="url(#cornerR)" stroke="none" />
      <path d="M98 128L517 66L608 385C610 425 598 446 565 451L265 494C225 496 200 485 190 450z" fill="#72b1bc" />
      <path d="M203 248L370 223L402 336L235 361z" fill="#767676" />
      <circle cx="428" cy="213" r="11" fill="#6c7274" />
      <circle cx="494" cy="322" r="11" fill="#6c7274" />
      <circle cx="494" cy="204" r="17" fill="#bcc8cc" stroke="#5d6466" strokeWidth="3" />
      <path d="M487 188v32c-12-6-12-26 0-32z" fill="#757c7e" stroke="none" />
      <g fill="none" stroke="#e8c526" strokeWidth="4">
        <path d="M82 1024L212 1243L624 1180M178 582L172 1172M265 494L566 451" />
        <path d="M98 128L517 66M595 522L588 1108" stroke="#8c8442" strokeWidth="3" />
      </g>
    </g>
  );
}

type Pt = [number, number];

// Small bend markers, drawn as short hooks along the fold lines.
function Marks({ at }: { at: Pt[] }) {
  return (
    <g stroke="#5a4fe0" strokeWidth="3" fill="none">
      {at.map(([x, y]) => (
        <path key={`${x}-${y}`} d={`M${x - 6} ${y - 5}c5-3 9 0 8 10M${x - 2} ${y}l6 6`} />
      ))}
    </g>
  );
}

function FlatPart({
  x,
  y,
  frame,
  outline,
  folds,
  marks,
  children,
}: {
  x: number;
  y: number;
  frame: string;
  outline: string;
  folds: string;
  marks: Pt[];
  children?: ReactNode;
}) {
  return (
    <g transform={`translate(${x} ${y}) scale(0.33333)`} fill="none">
      <path d={frame} stroke="#2bb038" strokeWidth="3" />
      <path d={outline} fill="#c2c2c2" fillRule="evenodd" />
      <path d={folds} stroke="#f2656e" strokeWidth="3" />
      {children}
      <Marks at={marks} />
    </g>
  );
}

function hatch(x1: number, x2: number, y: number, count: number) {
  return Array.from({ length: count }, (_, i) => `M${x1} ${y + i * 7}l${x2 - x1} -${Math.round((x2 - x1) * 0.15)}`).join("");
}

function Model() {
  return (
    <svg viewBox="280 162 1600 886" className="absolute inset-0 h-full w-full" aria-label="Model space">
      <Kiosk />
      <rect x="393.500" y="721.500" width="8" height="8" fill="none" stroke="#c8c8c8" />
      <FlatPart
        x={890}
        y={540}
        frame="M288 54L34 92L405 728L660 690M382 618L458 743L1172 634L1028 392"
        outline="M295 53L325 51L449 63L372 248Q358 280 365 292Q370 272 410 263L880 192Q905 190 922 202L1028 392Q1025 405 1010 409L540 482Q480 484 465 468Q490 495 520 505L785 637L690 685L662 688L475 640L463 622L412 628L385 618L351 557L370 540Q385 510 378 470L288 318Q275 290 228 268L168 250L135 187L150 173L198 167L188 150ZM514 284L566 373L692 353L640 264Z"
        folds="M322 54L195 164M152 175L198 255M370 308L462 466M765 210L891 427M892 193L1014 405M365 542L414 628M470 626L695 684"
        marks={[[267, 112], [181, 221], [418, 387], [836, 324], [960, 305], [396, 592], [586, 658]]}
      >
        <ellipse cx="594" cy="421" rx="13" ry="8" fill="#656565" />
        <ellipse cx="709" cy="384" rx="12" ry="8" fill="#656565" />
        <ellipse cx="729" cy="420" rx="19" ry="11" fill="#656565" />
        <clipPath id="bendTop">
          <path d="M228 268L372 248Q358 280 365 302L288 316Q275 290 228 268z" />
        </clipPath>
        <clipPath id="bendLow">
          <path d="M378 471L462 460Q490 495 520 505L374 526Q385 500 378 471z" />
        </clipPath>
        <path d={hatch(220, 380, 272, 10)} stroke="#f0434c" strokeWidth="3" clipPath="url(#bendTop)" />
        <path d={hatch(360, 530, 476, 11)} stroke="#f0434c" strokeWidth="3" clipPath="url(#bendLow)" />
        <path d="M300 260L330 310M423 468L452 520" stroke="#4a2bd0" strokeWidth="5" />
      </FlatPart>
      <FlatPart
        x={1190}
        y={490}
        frame="M300 108L24 152L355 718L628 678M335 590L415 735L1240 608L1155 465"
        outline="M303 108L665 56L670 65L704 73L750 158L918 134L942 143L968 143L1153 463L1138 467L1120 485L962 510L1006 598L990 620L630 674L628 667L592 660L545 572L380 597L330 588L145 266L158 264L178 248L335 222L291 133L305 120ZM573 578L608 646L984 590L948 524Z"
        folds="M300 117L668 63M294 132L703 72M338 222L752 158L962 510L545 572ZM158 266L345 586M178 248L377 596M918 134L1122 483M950 143L1138 467M592 657L1004 598M630 667L995 612"
        marks={[[448, 402], [553, 194], [864, 339], [1027, 314], [1052, 310], [259, 430], [283, 427], [759, 545]]}
      >
        <path d="M492 90L508 113M806 628L820 648" stroke="#5a4fe0" strokeWidth="4" />
      </FlatPart>
      <FlatPart
        x={1530}
        y={490}
        frame="M132 138L54 150L212 422L290 409M232 393L254 430L764 354L742 315"
        outline="M137 139L549 77L567 102L614 96L738 313L690 319L704 346L292 408L278 383L228 391L103 174L152 165Z"
        folds="M150 163L568 101L690 319L278 383Z"
        marks={[[363, 136], [218, 278], [635, 216], [491, 356]]}
      />
      <circle cx="1838" cy="200.500" r="30.500" fill="#b8b8b8" />
      {Array.from({ length: 8 }, (_, i) => {
        const a = (i * Math.PI) / 4;
        return <circle key={i} cx={1838 + 25 * Math.cos(a)} cy={200.5 + 25 * Math.sin(a)} r="1.700" fill="#707070" />;
      })}
    </svg>
  );
}

function Opt({ hot, children }: { hot?: [string, string]; children: string }) {
  return (
    <button className="bg-[#66727e] text-[#dfe3e6]">
      {hot ? hot[0] : ""}
      {hot && <span className="text-[#e0a020]">{hot[1]}</span>}
      {children}
    </button>
  );
}

function CommandLine() {
  return (
    <div className="absolute bottom-[5px] left-0 flex w-[962px] max-w-full flex-col items-start font-['DejaVu_Sans_Mono',monospace] text-xs leading-[18px] text-[#c8cacc]">
      <p className="mb-1.5 whitespace-pre bg-[#3e3f40] pl-0.5 pr-1">: _viewbase</p>
      <p className="mb-2 whitespace-pre bg-[#3e3f40] px-0.5">Preset: "None",  View scale: "Adapt to paper size"</p>
      <div className="flex w-full items-center whitespace-pre bg-[#343639] text-[#e2e4e6]">
        <span className="ml-[2px] mr-[3px] h-3 w-0 border-l-2 border-dotted border-[#aaa]" />
        <span>Select objects or [</span>
        <Opt hot={["", "E"]}>ntire model</Opt>/<Opt hot={["prese", "T"]}>s</Opt>/<Opt hot={["", "S"]}>pecial views</Opt>/
        <Opt hot={["selection options (", "?"]}>)</Opt>
        <span>] &lt;</span>
        <Opt>Entire model</Opt>
        <span>&gt;:</span>
        <button aria-label="Minimize command line" className="ml-auto mr-2 h-1 w-2.5 bg-white" />
      </div>
    </div>
  );
}

function DocTabs() {
  return (
    <div className="flex h-[17px] shrink-0 bg-[#2f3134] font-['Liberation_Sans',sans-serif] text-[11px] text-[#ececec]">
      <div className="flex w-16 items-center bg-[#191a1c] pl-2.5 pt-0.5">
        <button>Start</button>
        <CloseX label="Close Start" />
      </div>
      <div className="flex w-[162px] items-center pl-2.5 pt-0.5 font-bold">
        <button className="whitespace-nowrap">Control Box HX-1A557*</button>
        <CloseX label="Close Control Box HX-1A557" />
      </div>
      <button aria-label="New tab" className="flex w-[23px] items-center justify-center bg-[#191a1c] pt-0.5">
        <svg viewBox="0 0 10 10" className="size-2.5" stroke="#c8c8c8">
          <path d="M0 5h10M5 0v10" />
        </svg>
      </button>
    </div>
  );
}

function CloseX({ label }: { label: string }) {
  return (
    <button aria-label={label} className="ml-auto mr-2">
      <svg viewBox="0 0 9 9" className="size-[9px]" stroke="#c8c8c8">
        <path d="M0 0l9 9M9 0L0 9" />
      </svg>
    </button>
  );
}

function LayoutTabs() {
  return (
    <div className="flex h-[18px] shrink-0 items-center bg-[#2f3134] text-[11px] leading-[17px] text-[#e2e4e6]">
      {[
        ["First", "M2 1v8M8 1v8L3 5z"],
        ["Previous", "M7 1v8L2 5z"],
        ["Next", "M3 1v8l5-4z"],
        ["Last", "M8 1v8M2 1v8l5-4z"],
      ].map(([label, d]) => (
        <button key={label} aria-label={label} className="mr-px flex h-full w-4 items-center justify-center bg-[#191a1c]">
          <svg viewBox="0 0 10 10" className="size-2.5" fill="#fff" stroke="#fff">
            <path d={d} />
          </svg>
        </button>
      ))}
      <div className="flex h-full items-center bg-[#191a1c]">
        <button aria-label="Layout list" className="px-0.5">
          <svg viewBox="0 0 13 12" className="h-3 w-[13px]" fill="none" stroke="#9da0a3">
            <path d="M0 0h13v12H0zM0 4h13M0 8h13" />
          </svg>
        </button>
        <button className="bg-[#2f3134] px-0.5 font-bold text-white">Model</button>
        <button className="w-11 text-center">Layout1</button>
        <button className="w-[47px] text-center">Layout2</button>
        <button className="px-0.5">+</button>
      </div>
    </div>
  );
}

/* ---------- right rail ---------- */

const RAIL: [string, ReactNode][] = [
  ["Properties", <path d="M0 4h4M8 4h12M0 10h13M17 10h3M0 16h7M11 16h9M4 4a2 2 0 104 0 2 2 0 10-4 0M13 10a2 2 0 104 0 2 2 0 10-4 0M7 16a2 2 0 104 0 2 2 0 10-4 0" />],
  ["Layers", <path d="M10 1l9 5-9 5-9-5zM1 10l9 5 9-5M1 14l9 5 9-5" />],
  ["Tables", <path d="M1 1h18v17H1zM1 5h18M1 10h18M1 14h18M7 5v13M13 5v13" />],
  ["Warnings", <path d="M10 2l9 16H1zM10 8v5M10 14v2" />],
];

function RightRail() {
  return (
    <aside className="flex w-10 shrink-0 flex-col bg-[#191a1c]">
      <div className="flex h-[9px] items-start justify-center bg-[#2f3134] pt-px">
        <span className="w-3 border-t-2 border-dotted border-[#808386]" />
      </div>
      {RAIL.map(([label, path]) => (
        <button key={label} aria-label={label} className="flex h-11 items-center justify-center">
          <svg viewBox="0 0 20 20" className="size-5" fill="none" stroke="#dcdcdc" strokeWidth="1.2">
            {path}
          </svg>
        </button>
      ))}
    </aside>
  );
}

/* ---------- status bar ---------- */

const STATUS: { text: string; width: string; state?: "on" | "off" }[] = [
  { text: "-163.5, -751.53, 0", width: "w-[92px]" },
  { text: "Standard", width: "w-[47px]" },
  { text: "ISO-25", width: "w-[37px]" },
  { text: "Mechanical", width: "w-[56px]" },
  { text: "SNAP", width: "w-[33px]", state: "off" },
  { text: "GRID", width: "w-[29px]", state: "off" },
  { text: "ORTHO", width: "w-[38px]", state: "off" },
  { text: "POLAR", width: "w-[36px]", state: "on" },
  { text: "ESNAP", width: "w-[35px]", state: "on" },
  { text: "STRACK", width: "w-[41px]", state: "on" },
  { text: "LWT", width: "w-[25px]", state: "off" },
  { text: "TILE", width: "w-[25px]" },
  { text: "1:4", width: "w-[18px]" },
  { text: "DUCS", width: "w-[30px]", state: "on" },
  { text: "DYN", width: "w-[24px]", state: "on" },
  { text: "QUAD", width: "w-[32px]", state: "on" },
  { text: "RT", width: "w-[16px]", state: "on" },
  { text: "HKA", width: "w-[24px]", state: "on" },
  { text: "LOCKUI", width: "w-[41px]", state: "off" },
  { text: "None", width: "w-[28px]" },
];

function StatusBar() {
  return (
    <footer className="flex h-3.5 shrink-0 items-center bg-[#191a1c] pt-px text-[11px] leading-[14px] text-[#e2e4e6]">
      <span className="flex-1 pl-px">Ready</span>
      {STATUS.map(({ text, width, state }) => (
        <button
          key={text}
          className={clsx(
            "shrink-0 whitespace-nowrap border-r border-[#5a5c60] text-center text-[10px]",
            width,
            state === "on" && "bg-[#35373f]",
            state === "off" && "text-[#64676b]"
          )}
        >
          {text}
        </button>
      ))}
      <span className="mx-px size-[7px] rounded-full bg-[#ffb61e]" />
      <Caret />
      <svg viewBox="0 0 10 10" className="ml-1.5 size-2.5" fill="#a0a0a0">
        <path d="M7 1h2v2H7zM4 4h2v2H4zM7 4h2v2H7zM1 7h2v2H1zM4 7h2v2H4zM7 7h2v2H7z" />
      </svg>
    </footer>
  );
}

export default function App() {
  return (
    <div className="flex h-screen w-full flex-col overflow-hidden bg-[#0063b1] pl-0.5 font-['Open_Sans','Noto_Sans',sans-serif]">
      <TitleBar />
      <QuickBar />
      <RibbonTabs />
      <Ribbon />
      <div className="flex min-h-0 flex-1">
        <LeftPanel />
        <main className="flex min-w-0 flex-1 flex-col">
          <DocTabs />
          <div className="relative min-h-0 flex-1 overflow-hidden border-t border-[#a0a0a0] bg-linear-[180deg,#7a7a7a_0%,#767676_35%,#6c6c6c_60%,#535353_82%,#404040_100%]">
            <Model />
            <CommandLine />
          </div>
          <LayoutTabs />
        </main>
        <RightRail />
      </div>
      <StatusBar />
    </div>
  );
}
